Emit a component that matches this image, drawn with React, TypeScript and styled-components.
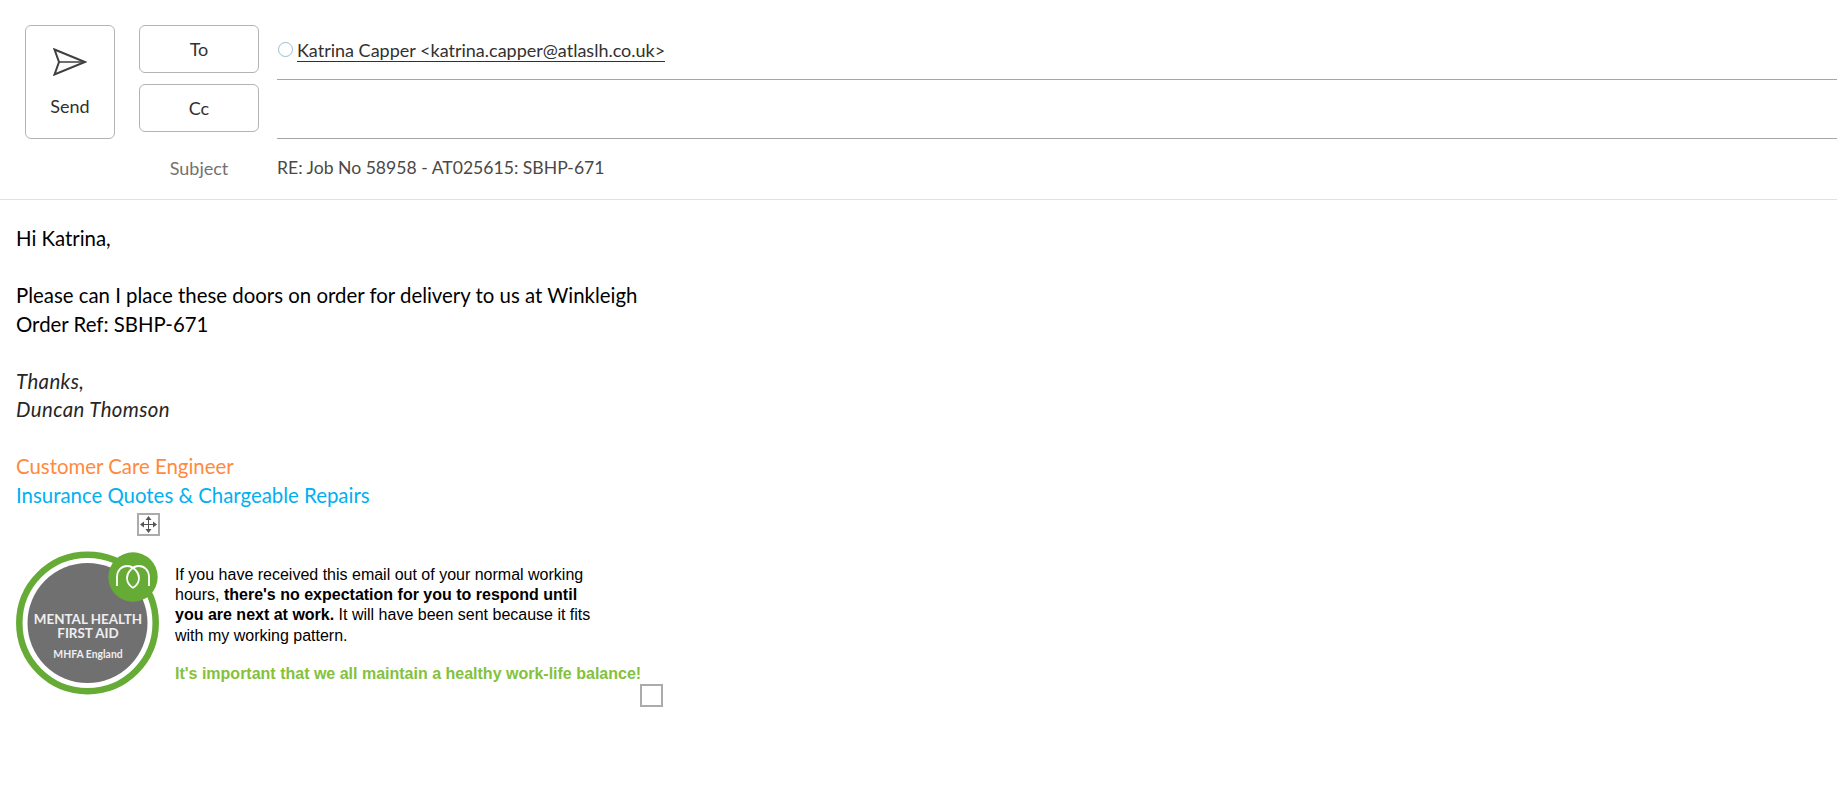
import React from "react"
import styled, { createGlobalStyle } from "styled-components"

const GlobalStyle = createGlobalStyle`
  html, body {
    margin: 0;
    padding: 0;
    background: #fff;
  }
`
const Page = styled.div`
  position: relative;
  width: 1837px;
  height: 786px;
  overflow: hidden;
  font-family: Lato, "Open Sans", sans-serif;
`
const Header = styled.div`
  display: flex;
  height: 200px;
  box-sizing: border-box;
  padding: 25px 0 0 25px;
  border-bottom: 1px solid #e1e1e1;
`
const SendButton = styled.div`
  display: flex;
  flex-flow: column;
  align-items: center;
  box-sizing: border-box;
  width: 90px;
  height: 114px;
  padding-top: 22px;
  margin-right: 24px;
  border: 1px solid #b5b3b1;
  border-radius: 6px;
  color: #323130;
  font-size: 18px;

  > svg {
    margin-bottom: 19px;
  }
`
const Fields = styled.div`
  flex: 1;
  display: grid;
  grid-template-columns: 120px 1fr;
  grid-template-rows: 59px 59px auto;
  column-gap: 18px;
`
const FieldButton = styled.div`
  display: flex;
  align-items: center;
  justify-content: center;
  box-sizing: border-box;
  height: 48px;
  border: 1px solid #b5b3b1;
  border-radius: 6px;
  color: #323130;
  font-size: 18px;
`
const FieldValue = styled.div`
  display: flex;
  align-items: flex-start;
  box-sizing: border-box;
  height: 55px;
  padding-top: 14px;
  border-bottom: 1px solid #a8a6a4;
  font-size: 18px;
  color: #323130;
`
const Presence = styled.span`
  box-sizing: border-box;
  width: 15px;
  height: 15px;
  margin: 3px 4px 0 1px;
  border: 1px solid #9cbcc8;
  border-radius: 50%;
`
const Recipient = styled.span`
  line-height: 22px;
  border-bottom: 1px solid #323130;
`
const SubjectLabel = styled.div`
  padding-top: 14px;
  text-align: center;
  color: #74726f;
  font-size: 18px;
`
const SubjectValue = styled.div`
  padding-top: 14px;
  color: #4a4846;
  font-size: 17.6px;
`
const Body = styled.div`
  padding: 24px 0 0 16px;
  font-size: 20.4px;
  line-height: 28.5px;
  color: #000;
`
const Line = styled.div<{ $color?: string; $italic?: boolean }>`
  min-height: 28.5px;
  color: ${p => p.$color ?? "inherit"};
  font-style: ${p => (p.$italic ? "italic" : "normal")};
  letter-spacing: ${p => (p.$italic ? "0.4px" : "normal")};
`
const SignatureTable = styled.div`
  display: flex;
  align-items: flex-start;
  margin-top: 41px;
`
const Badge = styled.svg`
  flex-shrink: 0;
  margin-right: 15px;
`
const Notice = styled.div`
  padding-top: 15px;
  font-family: "Liberation Sans", Arial, sans-serif;
  font-size: 16px;
  line-height: 20.2px;
  white-space: nowrap;
`
const Highlight = styled.div`
  margin-top: 18px;
  color: #84c13c;
  font-weight: bold;
`
const Handle = styled.div<{ $left: number; $top: number }>`
  position: absolute;
  left: ${p => p.$left}px;
  top: ${p => p.$top}px;
  display: flex;
  align-items: center;
  justify-content: center;
  box-sizing: border-box;
  width: 23px;
  height: 23px;
  border: 2px solid #ababab;
  background: #fff;
`

function SendIcon() {
  return (
    <svg width="34" height="28" viewBox="0 0 34 28">
      <path d="M1.5 1.5 L32 14 L1.5 26.5 L6 14 Z" fill="#fbfbfb" stroke="#3f3f3f" strokeWidth="2" />
      <path d="M6 14 H32" stroke="#3f3f3f" strokeWidth="1.5" />
    </svg>
  )
}

function MoveIcon() {
  return (
    <svg width="17" height="17" viewBox="0 0 17 17" fill="none" stroke="#555" strokeWidth="1">
      <path d="M8.5 1.5 V15.5 M1.5 8.5 H15.5" />
      <path d="M8.5 0 L5.5 4 H11.5 Z M8.5 17 L5.5 13 H11.5 Z M0 8.5 L4 5.5 V11.5 Z M17 8.5 L13 5.5 V11.5 Z" fill="#555" stroke="none" />
    </svg>
  )
}

function MhfaBadge() {
  return (
    <Badge width="144" height="146" viewBox="0 0 144 146">
      <circle cx="71.5" cy="73" r="68.2" fill="#fff" stroke="#66ab35" strokeWidth="6.5" />
      <circle cx="71.5" cy="73" r="60" fill="#717071" />
      <circle cx="117" cy="27" r="24.7" fill="#66ab35" />
      <g fill="none" stroke="#fff" strokeWidth="1.8">
        <path d="M101 36 V27 C101 20 106 16 111 16 C118 16 123 23 123 28 C123 32 120 36 117 38" />
        <path d="M133 36 V27 C133 20 128 16 123 16 C116 16 111 23 111 28 C111 32 114 36 117 38" />
      </g>
      <g fill="#eeeeee" textAnchor="middle" fontFamily="Lato, sans-serif" fontWeight="700">
        <text x="72" y="74" fontSize="13.4">MENTAL HEALTH</text>
        <text x="72" y="88" fontSize="13.4">FIRST AID</text>
        <text x="72" y="108" fontSize="10.4">MHFA England</text>
      </g>
    </Badge>
  )
}

export default function App() {
  return (
    <Page>
      <GlobalStyle />
      <Header>
        <SendButton>
          <SendIcon />
          Send
        </SendButton>
        <Fields>
          <FieldButton>To</FieldButton>
          <FieldValue>
            <Presence />
            <Recipient>Katrina Capper &lt;katrina.capper@atlaslh.co.uk&gt;</Recipient>
          </FieldValue>
          <FieldButton>Cc</FieldButton>
          <FieldValue />
          <SubjectLabel>Subject</SubjectLabel>
          <SubjectValue>RE: Job No 58958 - AT025615: SBHP-671</SubjectValue>
        </Fields>
      </Header>
      <Body>
        <Line>Hi Katrina,</Line>
        <Line />
        <Line>Please can I place these doors on order for delivery to us at Winkleigh</Line>
        <Line>Order Ref: SBHP-671</Line>
        <Line />
        <Line $italic $color="#262626">Thanks,</Line>
        <Line $italic $color="#262626">Duncan Thomson</Line>
        <Line />
        <Line $color="#ff8a3d">Customer Care Engineer</Line>
        <Line $color="#00b0f0">Insurance Quotes &amp; Chargeable Repairs</Line>
        <SignatureTable>
          <MhfaBadge />
          <Notice>
            If you have received this email out of your normal working<br />
            hours, <b>there's no expectation for you to respond until<br />
            you are next at work.</b> It will have been sent because it fits<br />
            with my working pattern.
            <Highlight>It's important that we all maintain a healthy work-life balance!</Highlight>
          </Notice>
        </SignatureTable>
      </Body>
      <Handle $left={137} $top={513}><MoveIcon /></Handle>
      <Handle $left={640} $top={684} />
    </Page>
  )
}
